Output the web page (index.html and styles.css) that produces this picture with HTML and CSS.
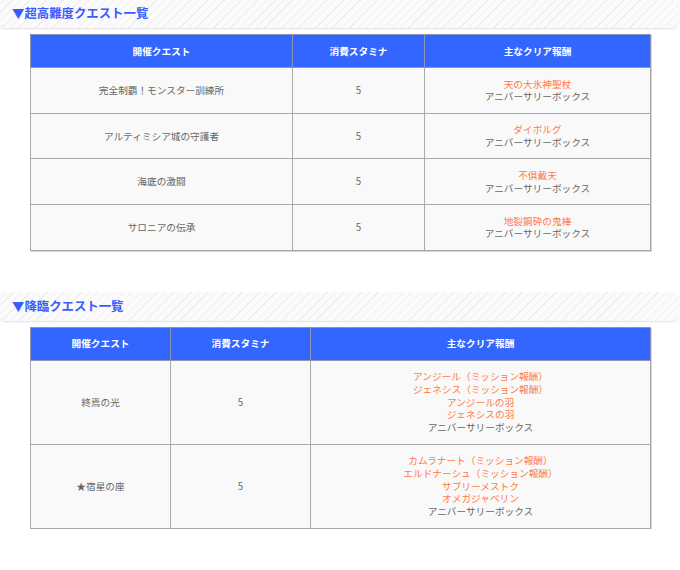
FILE: index.html
```html
<!DOCTYPE html>
<html lang="ja">
<head>
<meta charset="utf-8">
<link rel="stylesheet" href="styles.css">
</head>
<body>
<section class="block first">
  <h2 class="band">▼超高難度クエスト一覧</h2>
  <table class="quests">
    <colgroup><col class="c1a"><col class="c2a"><col class="c3a"></colgroup>
    <thead>
      <tr><th>開催クエスト</th><th>消費スタミナ</th><th>主なクリア報酬</th></tr>
    </thead>
    <tbody>
      <tr><td>完全制覇！モンスター訓練所</td><td>5</td><td><span class="hl">天の大氷神聖杖</span><br>アニバーサリーボックス</td></tr>
      <tr><td>アルティミシア城の守護者</td><td>5</td><td><span class="hl">ダイボルグ</span><br>アニバーサリーボックス</td></tr>
      <tr><td>海底の激闘</td><td>5</td><td><span class="hl">不倶戴天</span><br>アニバーサリーボックス</td></tr>
      <tr><td>サロニアの伝承</td><td>5</td><td><span class="hl">地裂鋼砕の鬼棒</span><br>アニバーサリーボックス</td></tr>
    </tbody>
  </table>
</section>
<section class="block second">
  <h2 class="band">▼降臨クエスト一覧</h2>
  <table class="quests">
    <colgroup><col class="c1b"><col class="c2b"><col class="c3b"></colgroup>
    <thead>
      <tr><th>開催クエスト</th><th>消費スタミナ</th><th>主なクリア報酬</th></tr>
    </thead>
    <tbody>
      <tr><td>終焉の光</td><td>5</td><td><span class="hl">アンジール（ミッション報酬）</span><br><span class="hl">ジェネシス（ミッション報酬）</span><br><span class="hl">アンジールの羽</span><br><span class="hl">ジェネシスの羽</span><br>アニバーサリーボックス</td></tr>
      <tr><td>★宿星の座</td><td>5</td><td><span class="hl">カムラナート（ミッション報酬）</span><br><span class="hl">エルドナーシュ（ミッション報酬）</span><br><span class="hl">サブリーメストク</span><br><span class="hl">オメガジャベリン</span><br>アニバーサリーボックス</td></tr>
    </tbody>
  </table>
</section>
</body>
</html>
```
FILE: styles.css
```css
html, body {
  margin: 0;
  padding: 0;
  background: #ffffff;
}
body {
  font-family: "Noto Sans CJK JP", "Noto Sans", sans-serif;
}
.block.first {
  margin-top: -1px;
}
.block.second {
  margin-top: 41px;
}
.band {
  width: 678px;
  height: 29px;
  margin: 0;
  padding: 0 0 0 12px;
  box-sizing: border-box;
  display: flex;
  align-items: center;
  font-size: 12.4px;
  font-weight: 700;
  line-height: 1;
  color: #3a5cff;
  border-radius: 0 0 5px 5px;
  background: repeating-linear-gradient(135deg, #fbfbfb 0 3px, #eeeeee 3px 4px, #fbfbfb 4px 6px);
  box-shadow: 0 1px 2px rgba(0, 0, 0, 0.12);
}
.block.second .band {
  border-radius: 5px;
}
.quests {
  margin: 6px 0 0 30px;
  width: 620px;
  border-collapse: collapse;
  table-layout: fixed;
  font-size: 9.66px;
  line-height: 12.75px;
  color: #666666;
  box-shadow: 1px 1px 0 #d4d4d4;
}
.c1a { width: 262px; }
.c2a { width: 132px; }
.c3a { width: 226px; }
.c1b { width: 140px; }
.c2b { width: 140px; }
.c3b { width: 340px; }
.quests th,
.quests td {
  border: 1px solid #a9a9a9;
  padding: 9.6px 4px;
  text-align: center;
  vertical-align: middle;
  background: #f9f9f9;
}
.quests th {
  background: #3366ff;
  color: #ffffff;
  font-weight: 700;
  border-color: #8d96b4;
}
.hl {
  color: #ff7a45;
}
```
